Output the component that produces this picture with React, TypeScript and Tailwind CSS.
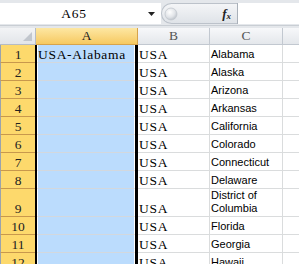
import React from "react";

interface RowProps {
  n: number;
  a?: string;
  c: string[];
  tall?: boolean;
}

const rows: RowProps[] = [
  { n: 1, a: "USA-Alabama", c: ["Alabama"] },
  { n: 2, c: ["Alaska"] },
  { n: 3, c: ["Arizona"] },
  { n: 4, c: ["Arkansas"] },
  { n: 5, c: ["California"] },
  { n: 6, c: ["Colorado"] },
  { n: 7, c: ["Connecticut"] },
  { n: 8, c: ["Delaware"] },
  { n: 9, c: ["District of", "Columbia"], tall: true },
  { n: 10, c: ["Florida"] },
  { n: 11, c: ["Georgia"] },
  { n: 12, c: ["Hawaii"] },
];

const FormulaBar = () => (
  <div className="h-[28px] bg-[#e4e7eb] pt-[3px]">
    <div className="flex h-[21px]">
      {/* name box */}
      <div className="flex w-[161px] items-center bg-white">
        <div className="w-[148px] pt-[1px] text-center text-[13.5px] leading-[16px] tracking-[0.7px] text-black">
          A65
        </div>
        <svg width="7" height="4" viewBox="0 0 7 4" className="mt-[1px]">
          <path d="M0 0h7L3.5 4z" fill="#222" />
        </svg>
      </div>
      {/* pill handle + fx */}
      <div className="flex w-[76px] items-center rounded-l-[11px] border border-r-0 border-[#bcc2ca] bg-gradient-to-b from-[#f4f5f7] to-[#dfe3e8]">
        <svg width="14" height="14" viewBox="0 0 14 14" className="ml-[2px]">
          <defs>
            <radialGradient id="knob" cx="0.4" cy="0.35" r="0.7">
              <stop offset="0" stopColor="#ffffff" />
              <stop offset="0.6" stopColor="#e1e4e8" />
              <stop offset="1" stopColor="#b8bec6" />
            </radialGradient>
          </defs>
          <circle cx="7" cy="7" r="6" fill="url(#knob)" stroke="#c3c8ce" strokeWidth="0.8" />
        </svg>
        <div className="ml-auto mr-[6px] flex items-end italic text-[#222]">
          <span className="text-[13px] font-bold leading-[14px]">f</span>
          <span className="text-[9px] font-bold leading-[10px]">x</span>
        </div>
      </div>
      {/* formula input */}
      <div className="flex-1 border-l border-[#a9b0b9] bg-white" />
    </div>
    <div className="mt-[1px] h-[1px] bg-[#c9ced4]" />
  </div>
);

const HeaderRow = () => (
  <div className="flex h-[17px] text-[13.5px] leading-[16px]">
    <div className="relative w-[36px] border-b border-r border-[#b6bcc4] bg-gradient-to-b from-[#f3f4f6] to-[#e2e5e9]">
      <svg width="9" height="9" viewBox="0 0 9 9" className="absolute right-[3px] bottom-[3px]">
        <path d="M9 0V9H0z" fill="#c1c6cd" />
      </svg>
    </div>
    <div className="flex w-[102px] items-center justify-center border-b border-r border-[#d6a34c] bg-gradient-to-b from-[#fde7a2] to-[#f6c95f] text-[#222]">
      A
    </div>
    <div className="flex w-[72px] items-center justify-center border-b border-r border-[#c2c8d0] bg-gradient-to-b from-[#f7f8fa] to-[#e4e7eb] text-[#555]">
      B
    </div>
    <div className="flex w-[73px] items-center justify-center border-b border-r border-[#c2c8d0] bg-gradient-to-b from-[#f7f8fa] to-[#e4e7eb] text-[#555]">
      C
    </div>
    <div className="flex-1 border-b border-[#c2c8d0] bg-gradient-to-b from-[#f7f8fa] to-[#e4e7eb]" />
  </div>
);

const SheetRow = ({ n, a, c, tall }: RowProps) => (
  <div className={tall ? "flex h-[28px]" : "flex h-[18px]"}>
    <div className="flex w-[35px] items-end justify-center border-b border-l border-b-[#c8984c] border-l-[#9aa3ad] bg-[#fdd96c] text-[13.5px] leading-[14px] text-[#222]">
      {n}
    </div>
    <div className="w-[103px] border-l-2 border-r-[3px] border-black">
      <div className="flex h-full items-end border-b border-x border-b-[#d3d8dd] border-x-white bg-[#bbdcfd] text-[13.5px] leading-[14px] tracking-[0.7px] text-black">
        {a}
      </div>
    </div>
    <div className="flex w-[72px] items-end border-b border-r border-[#dadcdd] pl-[1px] text-[13.5px] leading-[14px] tracking-[0.7px] text-black">
      USA
    </div>
    <div className="flex w-[73px] flex-col justify-end border-b border-r border-[#dadcdd] pb-[1px] pl-[1px] font-['Liberation_Sans'] text-[11px] leading-[13px] text-black">
      {c.map((line) => (
        <div key={line}>{line}</div>
      ))}
    </div>
    <div className="flex-1 border-b border-[#dadcdd]" />
  </div>
);

export default function App() {
  return (
    <div className="h-[264px] w-[299px] overflow-hidden bg-white font-['Liberation_Serif']">
      <FormulaBar />
      <HeaderRow />
      {rows.map((row) => (
        <SheetRow key={row.n} {...row} />
      ))}
    </div>
  );
}
